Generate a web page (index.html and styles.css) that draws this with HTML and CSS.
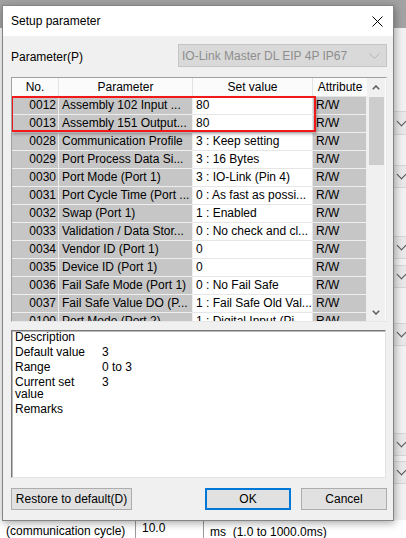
FILE: index.html
```html
<!DOCTYPE html>
<html lang="en">
  <head>
    <meta charset="UTF-8" />
    <meta name="viewport" content="width=device-width, initial-scale=1.0" />
    <title>Setup parameter</title>
    <link rel="stylesheet" href="styles.css">
  </head>
  <body>
    <div class="app">
      <div class="app-top"></div>
      <div class="app-main">
        <div class="app-side">
          <div class="side-row" style="height: 84px"></div>
          <div class="side-row combo" style="height: 23px"><span class="chev"></span></div>
          <div class="side-row" style="height: 31px"></div>
          <div class="side-row combo" style="height: 22px"><span class="chev"></span></div>
          <div class="side-row" style="height: 49px"></div>
          <div class="side-row combo" style="height: 22px"><span class="chev"></span></div>
          <div class="side-row" style="height: 7px"></div>
          <div class="side-row combo" style="height: 22px"><span class="chev"></span></div>
          <div class="side-row" style="height: 36px"></div>
          <div class="side-row combo" style="height: 22px"><span class="chev"></span></div>
          <div class="side-row" style="height: 88px"></div>
          <div class="side-row combo" style="height: 22px"><span class="chev"></span></div>
          <div class="side-row" style="height: 6px"></div>
          <div class="side-row combo" style="height: 22px"><span class="chev"></span></div>
        </div>
      </div>
      <div class="app-foot">
        <span class="foot-label">(communication cycle)</span>
        <span class="foot-input">10.0</span>
        <span class="foot-unit">ms&nbsp;&nbsp;(1.0 to 1000.0ms)</span>
      </div>
    </div>

    <div class="dialog">
      <div class="dialog-title">
        <span>Setup parameter</span>
        <svg class="close" width="11" height="11" viewBox="0 0 11 11">
          <path d="M0.5 0.5 L10.5 10.5 M10.5 0.5 L0.5 10.5" stroke="#000" stroke-width="1" fill="none" />
        </svg>
      </div>
      <div class="dialog-body">
        <div class="param-row">
          <label class="param-label">Parameter(P)</label>
          <div class="select">
            <span>IO-Link Master DL EIP 4P IP67</span>
            <svg width="11" height="6" viewBox="0 0 11 6">
              <polyline points="0.5,0.5 5.5,5.5 10.5,0.5" stroke="#b4b4b4" fill="none" />
            </svg>
          </div>
        </div>

        <div class="table">
          <div class="grid">
            <div class="hd">No.</div>
            <div class="hd">Parameter</div>
            <div class="hd">Set value</div>
            <div class="hd">Attribute</div>

            <div class="c no">0012</div><div class="c">Assembly 102 Input ...</div><div class="c val">80</div><div class="c">R/W</div>
            <div class="c no">0013</div><div class="c">Assembly 151 Output...</div><div class="c val">80</div><div class="c">R/W</div>
            <div class="c no">0028</div><div class="c">Communication Profile</div><div class="c val">3 : Keep setting</div><div class="c">R/W</div>
            <div class="c no">0029</div><div class="c">Port Process Data Si...</div><div class="c val">3 : 16 Bytes</div><div class="c">R/W</div>
            <div class="c no">0030</div><div class="c">Port Mode (Port 1)</div><div class="c val">3 : IO-Link (Pin 4)</div><div class="c">R/W</div>
            <div class="c no">0031</div><div class="c">Port Cycle Time (Port ...</div><div class="c val">0 : As fast as possi...</div><div class="c">R/W</div>
            <div class="c no">0032</div><div class="c">Swap (Port 1)</div><div class="c val">1 : Enabled</div><div class="c">R/W</div>
            <div class="c no">0033</div><div class="c">Validation / Data Stor...</div><div class="c val">0 : No check and cl...</div><div class="c">R/W</div>
            <div class="c no">0034</div><div class="c">Vendor ID (Port 1)</div><div class="c val">0</div><div class="c">R/W</div>
            <div class="c no">0035</div><div class="c">Device ID (Port 1)</div><div class="c val">0</div><div class="c">R/W</div>
            <div class="c no">0036</div><div class="c">Fail Safe Mode (Port 1)</div><div class="c val">0 : No Fail Safe</div><div class="c">R/W</div>
            <div class="c no">0037</div><div class="c">Fail Safe Value DO (P...</div><div class="c val">1 : Fail Safe Old Val...</div><div class="c">R/W</div>
            <div class="c no">0100</div><div class="c">Port Mode (Port 2)</div><div class="c val">1 : Digital Input (Pi...</div><div class="c">R/W</div>
          </div>
          <div class="scrollbar">
            <div class="sb-btn">
              <svg width="8" height="5" viewBox="0 0 8 5">
                <polyline points="0.8,4.2 4,1 7.2,4.2" stroke="#606060" stroke-width="1.6" fill="none" />
              </svg>
            </div>
            <div class="sb-track"><div class="sb-thumb"></div></div>
            <div class="sb-btn">
              <svg width="8" height="5" viewBox="0 0 8 5">
                <polyline points="0.8,0.8 4,4 7.2,0.8" stroke="#606060" stroke-width="1.6" fill="none" />
              </svg>
            </div>
          </div>
          <div class="highlight"></div>
        </div>

        <div class="desc">
          <div class="desc-label">Description</div><div></div>
          <div class="desc-label">Default value</div><div>3</div>
          <div class="desc-label">Range</div><div>0 to 3</div>
          <div class="desc-label">Current set value</div><div>3</div>
          <div class="desc-label">Remarks</div><div></div>
        </div>

        <div class="buttons">
          <button class="btn restore">Restore to default(D)</button>
          <span class="spacer"></span>
          <button class="btn ok">OK</button>
          <button class="btn">Cancel</button>
        </div>
      </div>
    </div>
  </body>
</html>
```

FILE: styles.css
```css
* {
  box-sizing: border-box;
}
body {
  margin: 0;
  font-family: "Liberation Sans", Arial, sans-serif;
  font-size: 12px;
  color: #000;
}

/* application behind the dialog */
.app {
  height: 538px;
  display: flex;
  flex-direction: column;
  background: #fbfbfb;
}
.app-top {
  height: 28px;
  background: #a3a3a3;
}
.app-main {
  flex: 1;
  display: flex;
  justify-content: flex-end;
}
.app-side {
  width: 14px;
  background: #f2f2f2;
}
.side-row {
  border-bottom: 1px solid #d6d6d6;
}
.side-row.combo {
  display: flex;
  align-items: center;
  justify-content: flex-end;
  padding-right: 1px;
  background: #e9e9e9;
}
.chev {
  width: 7px;
  height: 7px;
  border-right: 1px solid #555;
  border-bottom: 1px solid #555;
  transform: rotate(45deg);
  margin-top: -4px;
}
.app-foot {
  height: 18px;
  display: flex;
  align-items: center;
  background: #fff;
}
.foot-label {
  width: 135px;
  padding-left: 6px;
  padding-top: 4px;
}
.foot-input {
  align-self: stretch;
  width: 69px;
  border-left: 1px solid #9a9a9a;
  border-right: 1px solid #9a9a9a;
  padding-left: 6px;
  padding-top: 1px;
  background: #fff;
}
.foot-unit {
  padding-left: 6px;
  padding-top: 5px;
}

/* dialog */
.dialog {
  position: absolute;
  left: 2px;
  top: 5px;
  width: 392px;
  height: 516px;
  border: 1px solid #858585;
  background: #f0f0f0;
  box-shadow: 1px 2px 8px rgba(0, 0, 0, 0.35);
}
.dialog-title {
  height: 30px;
  background: #fff;
  display: flex;
  align-items: center;
  justify-content: space-between;
  padding: 0 9px 0 8px;
}
.dialog-title .close {
  margin-right: 1px;
}
.dialog-body {
  padding: 8px 6px 0 8px;
}
.param-row {
  display: flex;
  align-items: center;
  height: 23px;
}
.param-label {
  width: 167px;
  padding-top: 3px;
}
.select {
  flex: 1;
  height: 23px;
  border: 1px solid #c5c5c5;
  background: #d9d9d9;
  color: #8e8e8e;
  display: flex;
  align-items: center;
  justify-content: space-between;
  padding: 0 6px 0 3px;
}

/* parameter table */
.table {
  position: relative;
  margin-top: 10px;
  height: 245px;
  display: flex;
  border: 1px solid;
  border-color: #a0a0a0 #e6e6e6 #e6e6e6 #a0a0a0;
  background: #fff;
  overflow: hidden;
}
.grid {
  display: grid;
  grid-template-columns: 47px 134px 120px 54px;
  grid-template-rows: 19px;
  grid-auto-rows: 18px;
  width: 355px;
  overflow: hidden;
}
.hd {
  background: #fbfbfb;
  border-right: 1px solid #e3e3e3;
  border-bottom: 1px solid #e3e3e3;
  text-align: center;
  line-height: 18px;
}
.hd:nth-child(4) {
  border-right: none;
}
.c {
  background: #c6c6c6;
  border-right: 1px solid #eeeeee;
  border-bottom: 1px solid #eeeeee;
  line-height: 17px;
  padding-left: 3px;
  white-space: nowrap;
  overflow: hidden;
}
.c.no {
  text-align: right;
  padding: 0 2px 0 0;
}
.c.val {
  background: #fff;
  border-right-color: #e6e6e6;
  border-bottom-color: #e6e6e6;
}
.scrollbar {
  width: 18px;
  display: flex;
  flex-direction: column;
  background: #f0f0f0;
}
.sb-btn {
  height: 18px;
  display: flex;
  align-items: center;
  justify-content: center;
}
.sb-track {
  flex: 1;
  padding: 1px 1px 0 2px;
}
.sb-thumb {
  height: 68px;
  background: #cdcdcd;
}
.highlight {
  position: absolute;
  left: -1px;
  top: 18px;
  width: 305px;
  height: 36px;
  border: 2px solid #f01818;
  box-shadow: 1px 2px 3px rgba(0, 0, 0, 0.3);
}

/* description */
.desc {
  margin-top: 8px;
  width: 375px;
  height: 148px;
  border: 1px solid;
  border-color: #7a7a7a #e3e3e3 #e3e3e3 #7a7a7a;
  box-shadow: inset 1px 1px 0 #b8b8b8;
  background: #fff;
  display: grid;
  grid-template-columns: 87px 1fr;
  align-content: start;
  row-gap: 3px;
  padding: 0 3px;
  line-height: 12px;
}

/* buttons */
.buttons {
  display: flex;
  margin-top: 10px;
  gap: 10px;
}
.spacer {
  flex: 1;
}
.btn {
  height: 22px;
  width: 86px;
  font: inherit;
  background: #e1e1e1;
  border: 1px solid #adadad;
  padding: 0;
}
.btn.restore {
  width: 121px;
}
.btn.ok {
  border: 2px solid #0078d7;
}
```
